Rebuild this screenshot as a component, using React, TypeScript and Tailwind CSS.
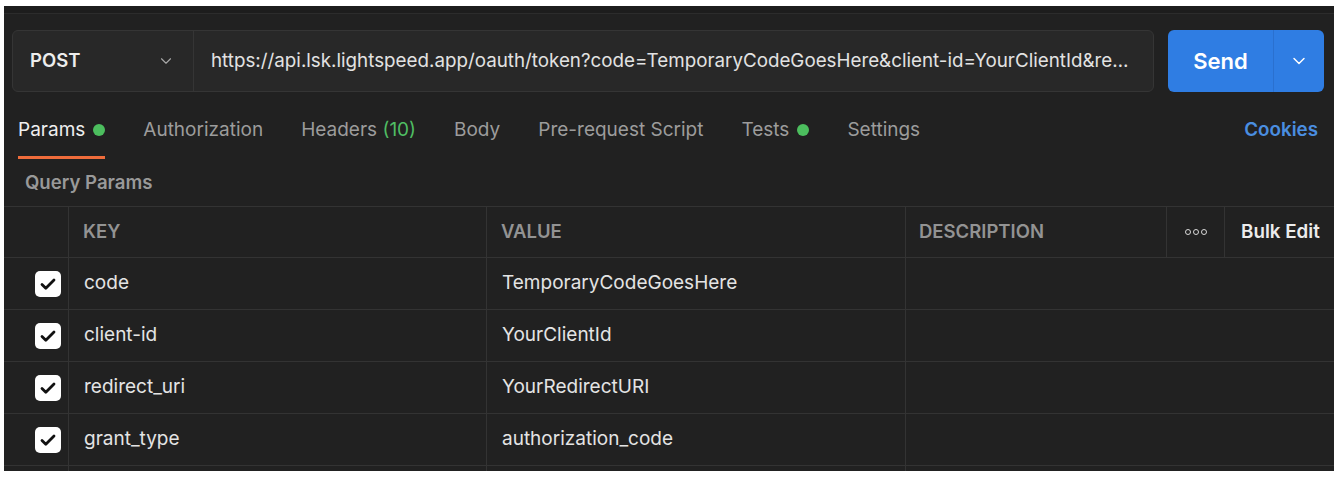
import { ChevronDown } from "lucide-react";

const tabs = [
  { label: "Params", active: true, dot: true },
  { label: "Authorization" },
  { label: "Headers", count: "(10)" },
  { label: "Body" },
  { label: "Pre-request Script" },
  { label: "Tests", dot: true },
  { label: "Settings" },
];

const params = [
  { key: "code", value: "TemporaryCodeGoesHere" },
  { key: "client-id", value: "YourClientId" },
  { key: "redirect_uri", value: "YourRedirectURI" },
  { key: "grant_type", value: "authorization_code" },
];

function Checkbox() {
  return (
    <div className="w-[26px] h-[26px] rounded-[5px] bg-white flex items-center justify-center">
      <svg width="18" height="18" viewBox="0 0 18 18" fill="none">
        <path d="M3 9.5l3.8 3.8L15 5" stroke="#111111" strokeWidth="2.8" strokeLinecap="round" strokeLinejoin="round" />
      </svg>
    </div>
  );
}

export default function App() {
  return (
    <div className="w-[1334px] h-[478px] bg-white pt-[6px] pl-[4px] font-['Inter','Noto_Sans',sans-serif] overflow-hidden">
      <div className="h-[465px] bg-[#212121] flex flex-col overflow-hidden">
        {/* top strip */}
        <div className="shrink-0 h-[8px] bg-[#1d1d1d] border-b border-[#2c2c2c]" />

        {/* request bar */}
        <div className="shrink-0 flex items-center pl-[8px] pr-[10px] pt-[16px] gap-[14px]">
          <div className="flex-1 min-w-0 h-[62px] flex rounded-[6px] border border-[#353535] bg-[#282828]">
            <div className="w-[181px] shrink-0 flex items-center justify-between pl-[17px] pr-[18px] border-r border-[#353535]">
              <span className="text-[18.5px] font-semibold text-[#ededed]">POST</span>
              <ChevronDown size={18} strokeWidth={1.5} className="text-[#a8a8a8]" />
            </div>
            <div className="flex-1 min-w-0 flex items-center pl-[17px] pr-[14px]">
              <span className="text-[18.8px] text-[#e2e2e2] truncate">
                https://api.lsk.lightspeed.app/oauth/token?code=TemporaryCodeGoesHere&amp;client-id=YourClientId&amp;redirect_uri=YourRedirectURI&amp;grant_type=authorization_code
              </span>
            </div>
          </div>
          <div className="w-[156px] shrink-0 h-[62px] flex rounded-[6px] bg-[#2f7de3] overflow-hidden">
            <div className="w-[106px] flex items-center justify-center border-r border-[#2a70cf]">
              <span className="text-[22px] font-semibold text-white">Send</span>
            </div>
            <div className="flex-1 flex items-center justify-center">
              <ChevronDown size={20} strokeWidth={1.75} className="text-white" />
            </div>
          </div>
        </div>

        {/* tabs */}
        <div className="shrink-0 flex items-end justify-between pl-[14px] pr-[16px] mt-[22px] h-[45px]">
          <div className="flex gap-[38px]">
            {tabs.map((t) => (
              <div
                key={t.label}
                className={`flex items-center gap-[8px] pb-[12px] border-b-[3px] ${
                  t.active ? "border-[#ef6c3b]" : "border-transparent"
                }`}
              >
                <span className={`text-[19px] ${t.active ? "text-[#efefef]" : "text-[#9c9c9c]"}`}>
                  {t.label}
                  {t.count && <span className="text-[#4fbd63]"> {t.count}</span>}
                </span>
                {t.dot && <span className="w-[12px] h-[12px] rounded-full bg-[#4cbe5e]" />}
              </div>
            ))}
          </div>
          <span className="text-[18.8px] font-semibold text-[#4a8ee0] pb-[15px]">Cookies</span>
        </div>

        {/* query params label */}
        <div className="shrink-0 h-[47px] flex items-center pl-[21px]">
          <span className="text-[18.6px] font-semibold text-[#999999]">Query Params</span>
        </div>

        {/* table */}
        <div className="shrink-0 border-t border-[#333333]">
          <div className="grid grid-cols-[65px_418px_419px_261px_58px_1fr] h-[51px] border-b border-[#333333]">
            <div className="border-r border-[#333333]" />
            <div className="flex items-center pl-[14px] border-r border-[#333333] text-[18.5px] font-semibold text-[#939393]">KEY</div>
            <div className="flex items-center pl-[14px] border-r border-[#333333] text-[18.5px] font-semibold text-[#939393]">VALUE</div>
            <div className="flex items-center pl-[13px] border-r border-[#333333] text-[18.5px] font-semibold text-[#939393]">DESCRIPTION</div>
            <div className="flex items-center justify-center border-r border-[#333333] gap-[2px]">
              {[0, 1, 2].map((i) => (
                <span key={i} className="w-[6px] h-[6px] rounded-full border-[1.5px] border-[#d8d8d8]" />
              ))}
            </div>
            <div className="flex items-center pl-[16px] text-[18.8px] font-semibold text-[#ececec]">Bulk Edit</div>
          </div>
          {params.map((p) => (
            <div key={p.key} className="grid grid-cols-[65px_418px_419px_1fr] h-[52px] border-b border-[#333333]">
              <div className="flex items-center pl-[31px] border-r border-[#333333]">
                <Checkbox />
              </div>
              <div className="flex items-center pl-[15px] border-r border-[#333333] text-[19px] text-[#e4e4e4]">{p.key}</div>
              <div className="flex items-center pl-[15px] border-r border-[#333333] text-[19px] text-[#e4e4e4]">{p.value}</div>
              <div />
            </div>
          ))}
          <div className="grid grid-cols-[65px_418px_419px_1fr] h-[52px]">
            <div className="border-r border-[#333333]" />
            <div className="border-r border-[#333333]" />
            <div className="border-r border-[#333333]" />
            <div />
          </div>
        </div>
      </div>
    </div>
  );
}
